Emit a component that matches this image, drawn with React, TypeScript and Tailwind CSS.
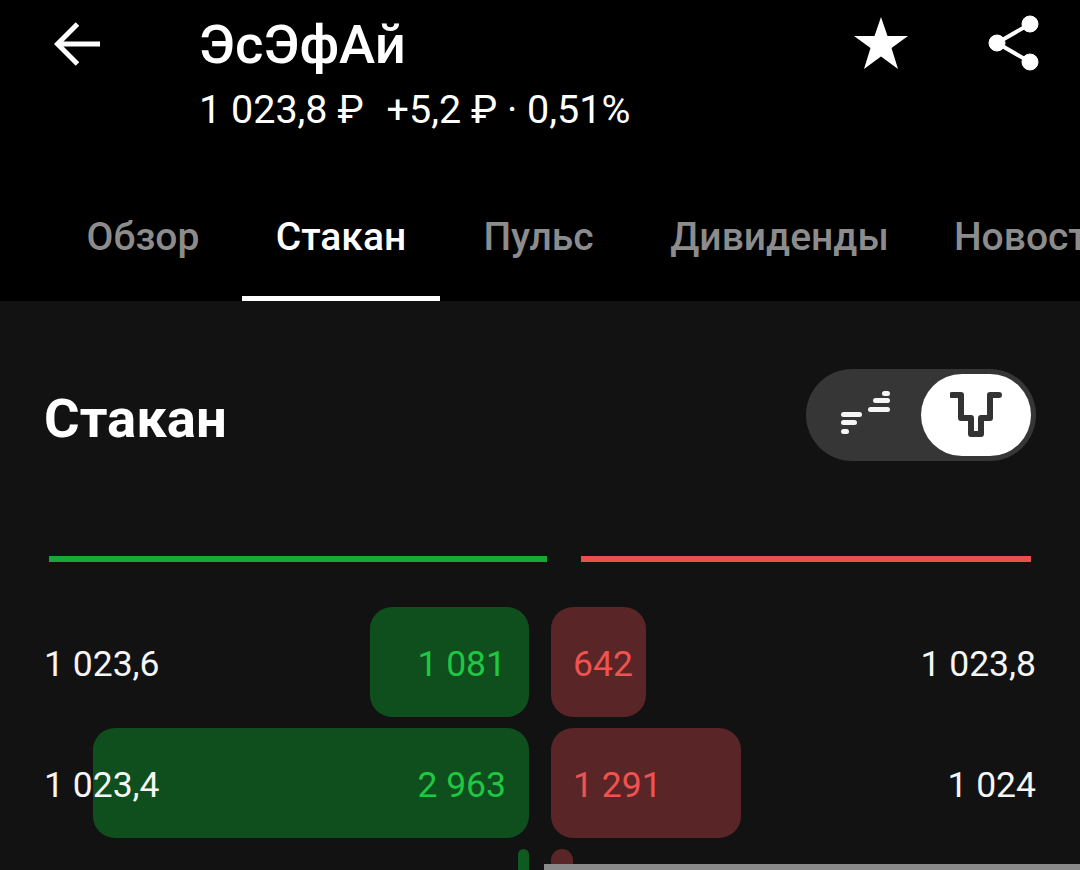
import React from 'react';

const Ruble = () => <span>₽</span>;

const tabs = [
  { label: 'Обзор', width: 'w-[198px]' },
  { label: 'Стакан', width: 'w-[198px]', active: true },
  { label: 'Пульс', width: 'w-[197px]' },
  { label: 'Дивиденды', width: 'w-[285px]' },
  { label: 'Новости', width: 'w-[220px]' },
];

const rows = [
  { bid: '1 023,6', bidQty: '1 081', bidW: 159, askQty: '642', askW: 95, ask: '1 023,8' },
  { bid: '1 023,4', bidQty: '2 963', bidW: 436, askQty: '1 291', askW: 190, ask: '1 024' },
];

const Row = ({ row }: { row: (typeof rows)[number] }) => (
  <div className="flex h-[110px] gap-[22px] text-[35.5px] leading-none">
    <div className="grid w-[484px] items-center">
      <div className="col-start-1 row-start-1 flex h-full justify-end">
        <div
          className="flex items-center justify-end rounded-[22px] bg-[#0f4f1d] pr-[23px] pt-[5px] text-[#1fc742]"
          style={{ width: row.bidW }}
        >
          {row.bidQty}
        </div>
      </div>
      <span className="col-start-1 row-start-1 self-center justify-self-start -ml-[1px] pt-[5px] text-[#f5f5f5]">{row.bid}</span>
    </div>
    <div className="grid w-[485px] items-center">
      <div className="col-start-1 row-start-1 flex h-full justify-start">
        <div
          className="flex items-center rounded-[22px] bg-[#5a2526] pl-[22px] pt-[5px] text-[#ef5350]"
          style={{ width: row.askW }}
        >
          {row.askQty}
        </div>
      </div>
      <span className="col-start-1 row-start-1 self-center justify-self-end pt-[5px] text-[#f5f5f5]">{row.ask}</span>
    </div>
  </div>
);

export default function App() {
  return (
    <div className="relative h-[870px] w-[1080px] overflow-hidden bg-[#121212] font-['Roboto',sans-serif] text-white">
      {/* Header */}
      <div className="h-[301px] bg-black">
        <div className="flex h-[196px] items-start">
          <div className="flex w-[199px] pl-[54px] pt-[22px]">
            <svg width="46" height="44" viewBox="0 0 46 44" fill="none" stroke="white" strokeWidth="5">
              <path d="M46 22H4M23.500 2 3.500 22 23.500 42" />
            </svg>
          </div>
          <div className="flex-1 pt-[14px]">
            <div className="text-[54.500px] font-medium leading-[60px]">ЭсЭфАй</div>
            <div className="mt-[15px] flex text-[39.500px] font-normal leading-[42px] text-white">
              <span>1 023,8 <Ruble /></span>
              <span className="ml-[23px]">+5,2 <Ruble /> · 0,51%</span>
            </div>
          </div>
          <div className="flex items-start pt-[17px] pr-[40px]">
            <svg width="54" height="52" viewBox="0 0 54 52" fill="white">
              <path d="M27 0 33.500 19H54L37.500 31 44 52 27 39.500 10 52 16.500 31 0 19H20.500Z" />
            </svg>
            <svg className="ml-[80px] -mt-[2px]" width="52" height="56" viewBox="0 0 52 56" fill="white" stroke="white">
              <circle cx="42" cy="9" r="8" />
              <circle cx="9" cy="28" r="8" />
              <circle cx="42" cy="47" r="8" />
              <path d="M42 9 9 28 42 47" fill="none" strokeWidth="4" />
            </svg>
          </div>
        </div>
        <div className="flex h-[105px] pl-[44px] text-[39px] font-medium">
          {tabs.map((t) => (
            <div
              key={t.label}
              className={`flex shrink-0 flex-col items-center ${t.width} ${t.active ? 'text-white' : 'text-[#8c8c8c]'}`}
            >
              <span className="flex-1 pt-[20px] leading-[42px] whitespace-nowrap">{t.label}</span>
              {t.active && <div className="h-[5px] w-full bg-white" />}
            </div>
          ))}
        </div>
      </div>

      {/* Section title + toggle */}
      <div className="flex items-center justify-between pl-[44px] pr-[44px] pt-[68px]">
        <h1 className="pt-[6px] text-[54.500px] font-bold leading-[60px]">Стакан</h1>
        <div className="flex h-[92px] w-[230px] items-center justify-between rounded-full bg-[#363636] pl-[35px] pr-[5px]">
          <svg className="-mt-[4px]" width="50" height="44" viewBox="0 0 50 44" fill="#f5f5f5">
            <rect x="0" y="21" width="21" height="5" rx="2.500" />
            <rect x="0" y="29" width="16" height="5" rx="2.500" />
            <rect x="0" y="38" width="8" height="5" rx="2.500" />
            <rect x="27" y="16" width="22" height="5" rx="2.500" />
            <rect x="32" y="7" width="17" height="5" rx="2.500" />
            <rect x="41" y="0" width="8" height="5" rx="2.500" />
          </svg>
          <div className="flex h-[82px] w-[110px] items-center justify-center rounded-full bg-white">
            <svg width="52" height="46" viewBox="0 0 52 46" fill="none" stroke="#333333" strokeWidth="6" strokeLinecap="round" strokeLinejoin="round">
              <path d="M2 3H11V26H21V42H31V26H40V3H49" />
            </svg>
          </div>
        </div>
      </div>

      {/* Depth lines */}
      <div className="mt-[95px] flex gap-[34px] pl-[49px]">
        <div className="h-[6px] w-[498px] bg-[#17a935]" />
        <div className="h-[6px] w-[450px] bg-[#e8504e]" />
      </div>

      {/* Order book */}
      <div className="mt-[45px] flex flex-col gap-[11px] pl-[45px]">
        {rows.map((r) => (
          <Row key={r.bid} row={r} />
        ))}
        <div className="flex h-[30px] gap-[22px]">
          <div className="flex w-[484px] justify-end">
            <div className="h-full w-[11px] rounded-[6px] bg-[#0f5a20]" />
          </div>
          <div className="h-full w-[22px] rounded-[11px] bg-[#5a2526]" />
        </div>
      </div>

      {/* Gray strip at the bottom edge */}
      <div className="absolute bottom-0 left-[544px] right-0 h-[6px] bg-[#8a8a8a]" />
    </div>
  );
}
